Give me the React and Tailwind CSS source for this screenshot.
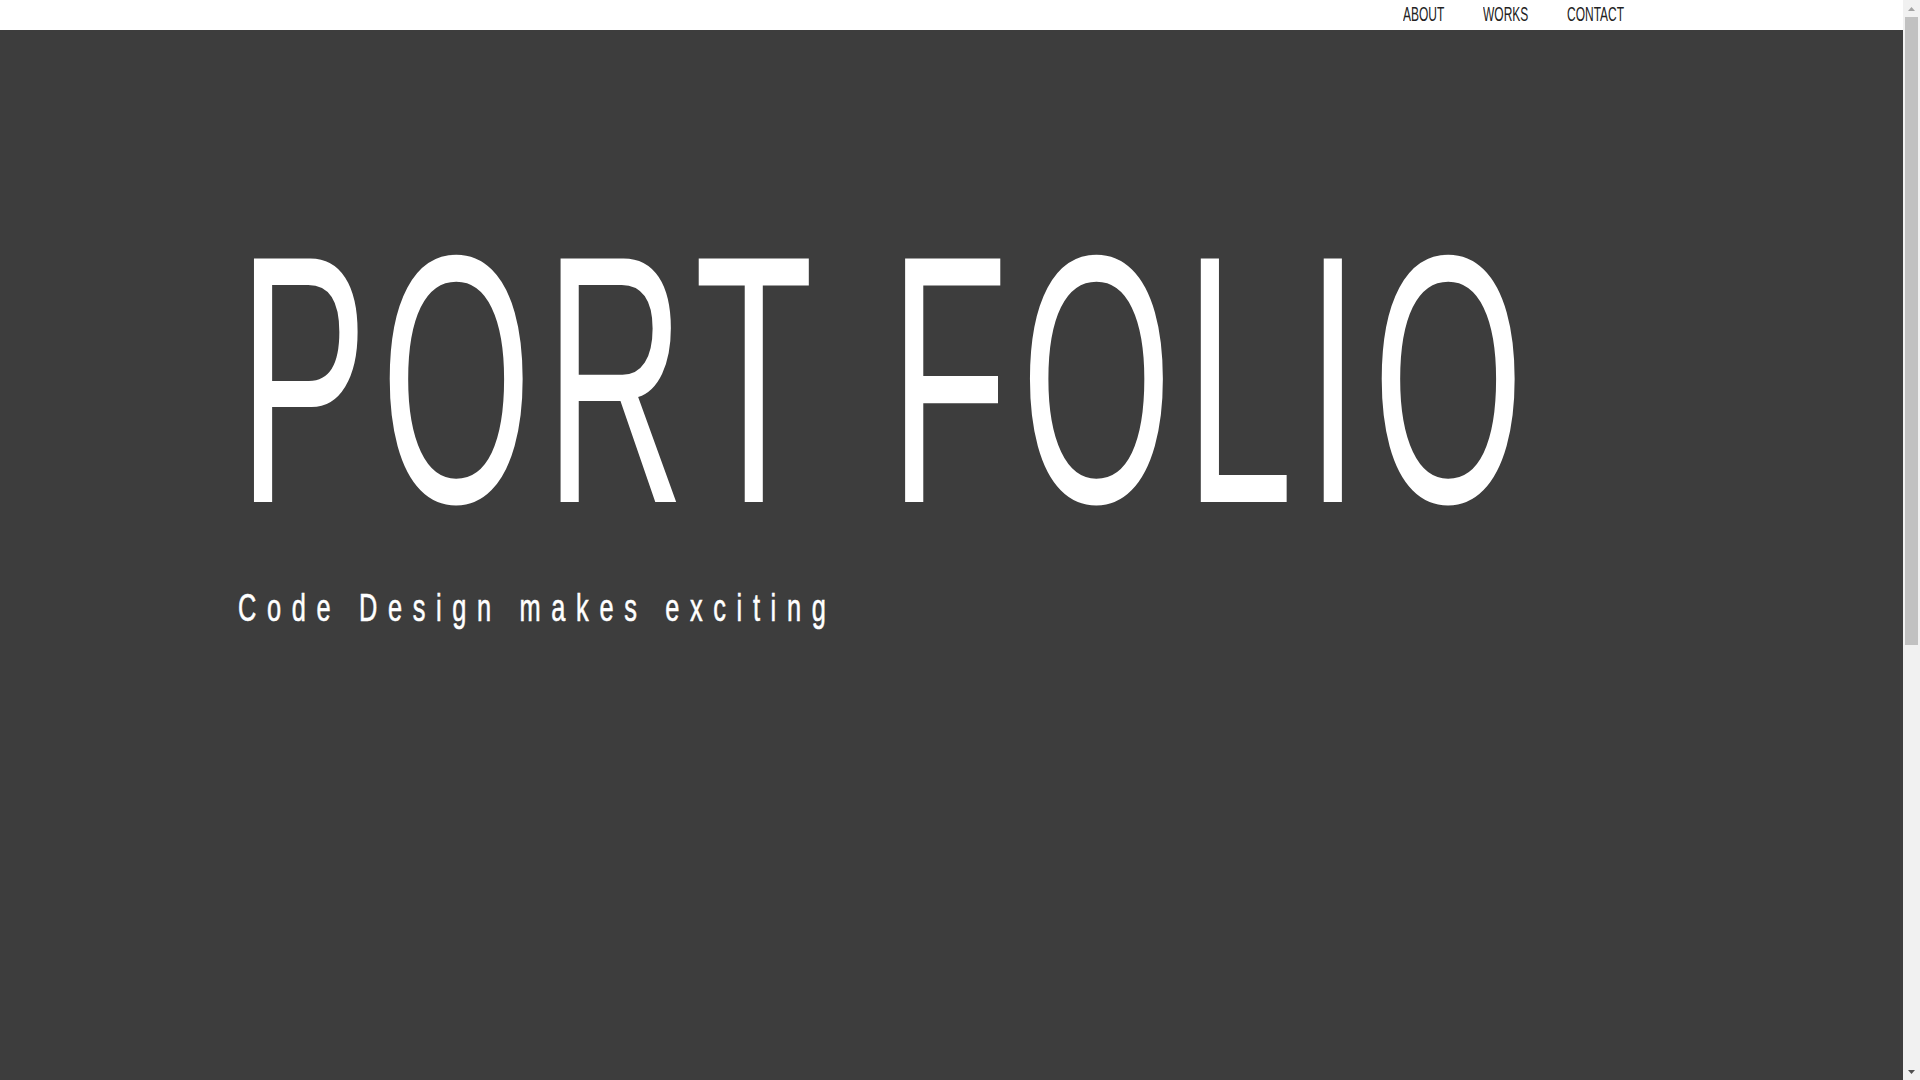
import React from "react";

const navItems = [
  { label: "ABOUT", width: "w-[80px]" },
  { label: "WORKS", width: "w-[84px]" },
  { label: "CONTACT", width: "w-[60px]" },
];

const Header = () => {
  return (
    <header className="h-[30px] shrink-0 bg-white">
      <ul className="flex justify-end pr-[276px] h-full">
        {navItems.map((item) => (
          <li key={item.label} className={`${item.width} h-full`}>
            <a
              href="#"
              className="block whitespace-nowrap origin-left scale-x-[0.6] text-[20px] leading-[28px] text-[#222222]"
            >
              {item.label}
            </a>
          </li>
        ))}
      </ul>
    </header>
  );
};

// window scrollbar as it shows in the screenshot
const Scrollbar = () => {
  return (
    <aside className="w-[17px] shrink-0 h-full bg-[#f1f1f1] flex flex-col items-center">
      <div className="h-[17px] w-full flex items-center justify-center">
        <svg width="7" height="4" viewBox="0 0 7 4">
          <path d="M0 4 L3.5 0 L7 4 Z" fill="#a3a3a3" />
        </svg>
      </div>
      <div className="h-[628px] w-[13px] bg-[#c1c1c1]" />
      <div className="flex-1" />
      <div className="h-[17px] w-full flex items-center justify-center">
        <svg width="7" height="4" viewBox="0 0 7 4">
          <path d="M0 0 L7 0 L3.5 4 Z" fill="#505050" />
        </svg>
      </div>
    </aside>
  );
};

const App = () => {
  return (
    <div className="flex h-screen overflow-hidden bg-[#3d3d3d] font-['Liberation_Sans',Arial,sans-serif]">
      <div className="flex-1 min-w-0 flex flex-col">
        <Header />
        <main className="flex-1 bg-[#3d3d3d] pl-[238px] pt-[173px]">
          <h1 className="whitespace-nowrap origin-left scale-x-[0.55] text-[354px] leading-none tracking-[23px] text-white font-normal">
            PORT FOLIO
          </h1>
          <p className="mt-[31px] whitespace-nowrap origin-left scale-x-[0.65] text-[39px] leading-none tracking-[16.4px] text-white [-webkit-text-stroke:0.6px_#ffffff]">
            Code Design makes exciting
          </p>
        </main>
      </div>
      <Scrollbar />
    </div>
  );
};

export default App;
